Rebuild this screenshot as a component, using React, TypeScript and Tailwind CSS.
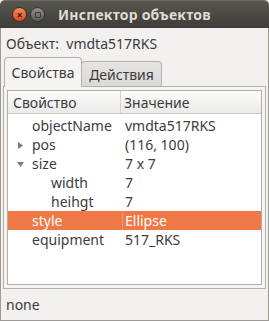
import React from 'react';

interface Row {
  name: string;
  value: string;
  level: number;
  expander?: 'closed' | 'open';
  selected?: boolean;
}

const rows: Row[] = [
  { name: 'objectName', value: 'vmdta517RKS', level: 0 },
  { name: 'pos', value: '(116, 100)', level: 0, expander: 'closed' },
  { name: 'size', value: '7 x 7', level: 0, expander: 'open' },
  { name: 'width', value: '7', level: 1 },
  { name: 'heihgt', value: '7', level: 1 },
  { name: 'style', value: 'Ellipse', level: 0, selected: true },
  { name: 'equipment', value: '517_RKS', level: 0 },
];

const Expander: React.FC<{ kind: 'closed' | 'open' }> = ({ kind }) => (
  <svg width="7" height="7" viewBox="0 0 7 7" className="absolute left-[9px] top-[7px]">
    {kind === 'closed' ? (
      <polygon points="1,0 6,3.5 1,7" fill="#7b7b78" />
    ) : (
      <polygon points="0,1 7,1 3.5,6" fill="#7b7b78" />
    )}
  </svg>
);

const App: React.FC = () => {
  return (
    <div className="w-[269px] h-[321px] flex flex-col bg-[#f2f1f0] text-[#3c3c3c] font-['Noto_Sans',sans-serif] text-[14px] overflow-hidden">
      {/* Title bar */}
      <div className="h-[28px] flex items-center rounded-t-[5px] bg-gradient-to-b from-[#57564f] to-[#3d3c38] border-t border-[#6b6a63]">
        <div className="ml-[12px] w-[15px] h-[15px] rounded-full bg-gradient-to-b from-[#f58a5c] to-[#e0461c] border border-[#3a2a22] flex items-center justify-center">
          <span className="text-[#3a1a0c] text-[10px] font-bold leading-none">×</span>
        </div>
        <div className="ml-[3px] w-[15px] h-[15px] rounded-full bg-gradient-to-b from-[#8f8d87] to-[#5f5e59] border border-[#34332f] flex items-center justify-center">
          <div className="w-[6px] h-[6px] border border-[#3a3935] rounded-[1px]" />
        </div>
        <span className="ml-[13px] text-[#dfdbd2] font-bold text-[14px] tracking-[0.2px]">Инспектор объектов</span>
      </div>

      {/* Body */}
      <div className="flex-1 flex flex-col border-x border-b border-[#9d9b95] px-[2px]">
        <div className="h-[30px] flex items-center pl-[3px] pt-[1px]">
          <span>Объект:&nbsp;&nbsp;vmdta517RKS</span>
        </div>

        {/* Tabs */}
        <div className="h-[29px] flex items-end pl-[1px] relative z-10 -mb-[1px]">
          <div className="h-[30px] w-[78px] flex items-center justify-center bg-[#f5f4f3] border border-b-0 border-[#b4b1ab] rounded-t-[4px]">
            <span className="-mt-[1px]">Свойства</span>
          </div>
          <div className="h-[25px] w-[81px] flex items-center justify-center bg-gradient-to-b from-[#e6e4e1] to-[#dcdad6] border border-b-0 border-[#b4b1ab] rounded-t-[4px] -ml-[1px] mb-[1px]">
            <span>Действия</span>
          </div>
        </div>

        {/* Pane */}
        <div className="h-[203px] border border-[#b4b1ab] bg-[#f5f4f3] p-[3px]">
          <div className="h-full border border-[#b2afa9] bg-white flex flex-col">
            <div className="h-[23px] flex bg-gradient-to-b from-[#fdfdfd] to-[#ebeae8] border-b border-[#cdcac4]">
              <div className="w-[113px] flex items-center pl-[5px] border-r border-[#d6d3ce]">Свойство</div>
              <div className="flex-1 flex items-center pl-[3px]">Значение</div>
            </div>
            <div className="pt-[2px]">
              {rows.map((r) => (
                <div
                  key={r.name}
                  className={`h-[19px] flex relative ${r.selected ? 'bg-[#f07746] text-white' : ''}`}
                >
                  {r.expander && <Expander kind={r.expander} />}
                  <div
                    className={`w-[117px] flex items-center ${r.level === 1 ? 'pl-[43px]' : 'pl-[24px]'}`}
                  >
                    {r.name}
                  </div>
                  {r.selected && <div className="absolute left-[114px] top-0 h-full w-px bg-[#f49a74]" />}
                  <div className="flex-1 flex items-center">{r.value}</div>
                </div>
              ))}
            </div>
          </div>
        </div>

        {/* Status */}
        <div className="flex-1 flex items-center pl-[3px]">
          <span>none</span>
        </div>
      </div>
    </div>
  );
};

export default App;
